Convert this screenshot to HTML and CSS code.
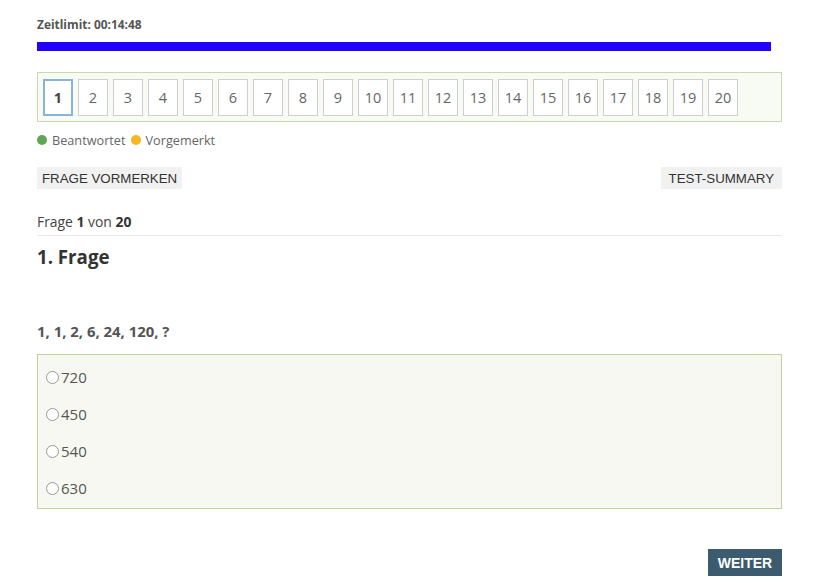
FILE: index.html
```html
<!DOCTYPE html>
<html lang="de">
<head>
<meta charset="utf-8">
<title>Test</title>
<link rel="stylesheet" href="styles.css">
</head>
<body>
<div class="page">
  <div class="timer">Zeitlimit: 00:14:48</div>
  <div class="timebar"><div class="timebar-fill"></div></div>

  <div class="nav">
    <button class="qbtn active">1</button>
    <button class="qbtn">2</button>
    <button class="qbtn">3</button>
    <button class="qbtn">4</button>
    <button class="qbtn">5</button>
    <button class="qbtn">6</button>
    <button class="qbtn">7</button>
    <button class="qbtn">8</button>
    <button class="qbtn">9</button>
    <button class="qbtn">10</button>
    <button class="qbtn">11</button>
    <button class="qbtn">12</button>
    <button class="qbtn">13</button>
    <button class="qbtn">14</button>
    <button class="qbtn">15</button>
    <button class="qbtn">16</button>
    <button class="qbtn">17</button>
    <button class="qbtn">18</button>
    <button class="qbtn">19</button>
    <button class="qbtn">20</button>
  </div>

  <div class="legend">
    <span class="dot green"></span><span class="legend-text">Beantwortet</span>
    <span class="dot orange"></span><span class="legend-text">Vorgemerkt</span>
  </div>

  <div class="actions">
    <button class="plain">FRAGE VORMERKEN</button>
    <button class="plain wide">TEST-SUMMARY</button>
  </div>

  <div class="counter">Frage <b>1</b> von <b>20</b></div>
  <h2 class="title">1. Frage</h2>

  <p class="question">1, 1, 2, 6, 24, 120, ?</p>

  <div class="options">
    <label class="option"><span class="radio"></span>720</label>
    <label class="option"><span class="radio"></span>450</label>
    <label class="option"><span class="radio"></span>540</label>
    <label class="option"><span class="radio"></span>630</label>
  </div>

  <div class="footer">
    <button class="next">WEITER</button>
  </div>
</div>
</body>
</html>
```

FILE: styles.css
```css
* { box-sizing: border-box; }
html, body { margin: 0; padding: 0; background: #fff; }
body { font-family: "Open Sans", "Noto Sans", sans-serif; color: #555; }

.page {
  width: 745px;
  margin-left: 37px;
  padding-top: 16px;
}

.timer {
  font-size: 11.9px;
  font-weight: 700;
  color: #555;
  line-height: 16px;
  margin-bottom: 10px;
}

.timebar {
  width: 734px;
  height: 9px;
}
.timebar-fill {
  width: 100%;
  height: 100%;
  background: #2200ff;
}

.nav {
  margin-top: 21px;
  height: 50px;
  border: 1px solid #c9d9ab;
  background: #f8faf4;
  display: flex;
  gap: 5px;
  padding: 6px 0 0 5px;
}
.qbtn {
  width: 30px;
  height: 37px;
  border: 1px solid #cfcfcf;
  background: #fff;
  font-family: "Open Sans", sans-serif;
  font-size: 14.5px;
  color: #666;
  padding: 0;
  margin: 0;
}
.qbtn.active {
  border: 2px solid #8ab3dc;
  font-weight: 700;
  color: #444;
}

.legend {
  margin-top: 10px;
  display: flex;
  align-items: center;
  font-size: 12.7px;
  line-height: 16px;
  color: #666;
}
.dot {
  display: inline-block;
  width: 10px;
  height: 10px;
  border-radius: 50%;
  margin-right: 5px;
}
.dot.green { background: #62a552; }
.dot.orange { background: #f9b523; }
.legend-text { margin-right: 5px; }

.actions {
  margin-top: 19px;
  display: flex;
  justify-content: space-between;
}
.plain {
  font-family: "Liberation Sans", Arial, sans-serif;
  font-size: 13.3px;
  color: #333;
  background: #f1f1f1;
  border: none;
  height: 22px;
  padding: 0 5px;
  margin: 0;
}
.plain.wide { padding: 0 8px; }

.counter {
  margin-top: 24px;
  font-size: 13.9px;
  line-height: 18px;
  color: #444;
  padding-bottom: 4px;
  border-bottom: 1px solid #e8e8e8;
}
.counter b { color: #333; }

.title {
  margin: 8px 0 0 0;
  font-size: 18.7px;
  font-weight: 700;
  color: #333;
  line-height: 26px;
}

.question {
  margin: 51px 0 0 0;
  font-size: 14.9px;
  font-weight: 700;
  color: #555;
  line-height: 20px;
}

.options {
  margin-top: 13px;
  border: 1px solid #bfd39b;
  background: #f6f8f1;
  padding: 11px 8px 9px 8px;
  display: flex;
  flex-direction: column;
  gap: 15px;
}
.option {
  display: flex;
  align-items: center;
  font-size: 15px;
  color: #555;
  height: 22px;
}
.radio {
  width: 13px;
  height: 13px;
  border: 1px solid #999;
  border-radius: 50%;
  background: #fff;
  margin-right: 2px;
  margin-top: 1px;
}

.footer {
  margin-top: 40px;
  display: flex;
  justify-content: flex-end;
}
.next {
  font-family: "Liberation Sans", Arial, sans-serif;
  font-weight: 700;
  font-size: 14px;
  color: #fff;
  background: #3c5b6f;
  border: none;
  height: 27px;
  width: 74px;
  padding: 0;
  margin: 0;
}
```
